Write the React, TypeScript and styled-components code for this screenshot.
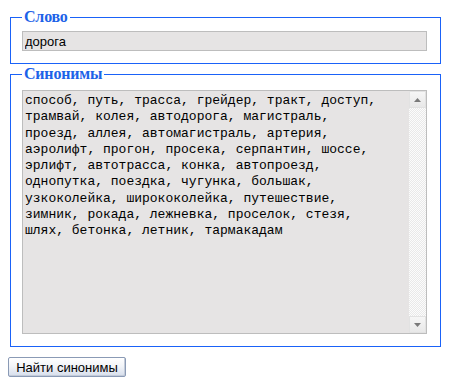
import React, { useState } from "react";
import styled, { createGlobalStyle } from "styled-components";

const synonyms = [
  "способ, путь, трасса, грейдер, тракт, доступ,",
  "трамвай, колея, автодорога, магистраль,",
  "проезд, аллея, автомагистраль, артерия,",
  "аэролифт, прогон, просека, серпантин, шоссе,",
  "эрлифт, автотрасса, конка, автопроезд,",
  "однопутка, поездка, чугунка, большак,",
  "узкоколейка, ширококолейка, путешествие,",
  "зимник, рокада, лежневка, проселок, стезя,",
  "шлях, бетонка, летник, тармакадам",
].join("\n");

function Arrow({ down }: { down?: boolean }) {
  return (
    <ArrowButton type="button" tabIndex={-1}>
      <svg width="7" height="4" viewBox="0 0 7 4">
        {down ? (
          <polygon points="0,0 7,0 3.5,4" fill="#7a7a7a" />
        ) : (
          <polygon points="0,4 7,4 3.5,0" fill="#7a7a7a" />
        )}
      </svg>
    </ArrowButton>
  );
}

export default function App() {
  const [word, setWord] = useState("дорога");
  const [result, setResult] = useState(synonyms);

  return (
    <>
      <GlobalStyle />
      <Form onSubmit={(e) => e.preventDefault()}>
        <Group $top={5}>
          <Legend>Слово</Legend>
          <WordInput
            type="text"
            value={word}
            onChange={(e) => setWord(e.target.value)}
          />
        </Group>

        <Group $top={7}>
          <Legend>Синонимы</Legend>
          <ResultBox>
            <ResultArea
              value={result}
              onChange={(e) => setResult(e.target.value)}
            />
            <ScrollBar>
              <Arrow />
              <Arrow down />
            </ScrollBar>
          </ResultBox>
        </Group>

        <SubmitButton type="submit">Найти синонимы</SubmitButton>
      </Form>
    </>
  );
}

const GlobalStyle = createGlobalStyle`
  body {
    margin: 8px;
    background: #fff;
    font-family: "Liberation Sans", Arial, sans-serif;
  }
`;

const Form = styled.form`
  display: flex;
  flex-direction: column;
  align-items: flex-start;
`;

const Group = styled.fieldset<{ $top: number }>`
  box-sizing: border-box;
  width: 431px;
  margin: 0 2px 1px;
  padding: ${(p) => p.$top}px 12px 12px 11px;
  border: 1px solid #1a62f8;
  min-width: 0;
`;

const Legend = styled.legend`
  padding: 0 2px;
  margin-left: 0;
  font-family: "Liberation Serif", "Times New Roman", serif;
  font-weight: bold;
  font-size: 16px;
  letter-spacing: -0.2px;
  line-height: 18px;
  color: #1c62e8;
`;

const WordInput = styled.input`
  box-sizing: border-box;
  display: block;
  width: 405px;
  height: 20px;
  margin: 0;
  padding: 1px 2px;
  border: 1px solid #bdbdbd;
  background: #e6e4e4;
  font-family: "Liberation Sans", Arial, sans-serif;
  font-size: 13px;
  color: #000;
  outline: none;
`;

const ResultBox = styled.div`
  box-sizing: border-box;
  display: flex;
  width: 405px;
  height: 244px;
  border: 1px solid #bdbdbd;
  background: #e6e4e4;
`;

const ResultArea = styled.textarea`
  flex: 1;
  min-width: 0;
  margin: 0;
  padding: 2px;
  border: none;
  background: transparent;
  font-family: "Liberation Mono", "Courier New", monospace;
  font-size: 13px;
  line-height: 16.3px;
  color: #000;
  resize: none;
  overflow: hidden;
  white-space: pre;
  outline: none;
`;

const ScrollBar = styled.div`
  width: 17px;
  display: flex;
  flex-direction: column;
  justify-content: space-between;
  background: repeating-conic-gradient(#e9e9e9 0 25%, #fcfcfc 0 50%) 0 0 / 2px 2px;
`;

const ArrowButton = styled.button`
  box-sizing: border-box;
  width: 17px;
  height: 17px;
  padding: 0;
  margin: 0;
  display: flex;
  align-items: center;
  justify-content: center;
  border: 1px solid #e2e2e2;
  background: linear-gradient(#f6f6f6, #e8e8e8);
`;

const SubmitButton = styled.button`
  margin-top: 9px;
  height: 20px;
  width: 118px;
  padding: 0 6px;
  border: 1px solid #8a9ab5;
  border-radius: 2px;
  background: linear-gradient(#ffffff 0%, #f2f4f8 45%, #d6deec 100%);
  box-shadow: inset -1px -1px 0 #c3cbd9;
  font-family: "Liberation Sans", Arial, sans-serif;
  font-size: 13px;
  color: #000;
  cursor: pointer;
`;
